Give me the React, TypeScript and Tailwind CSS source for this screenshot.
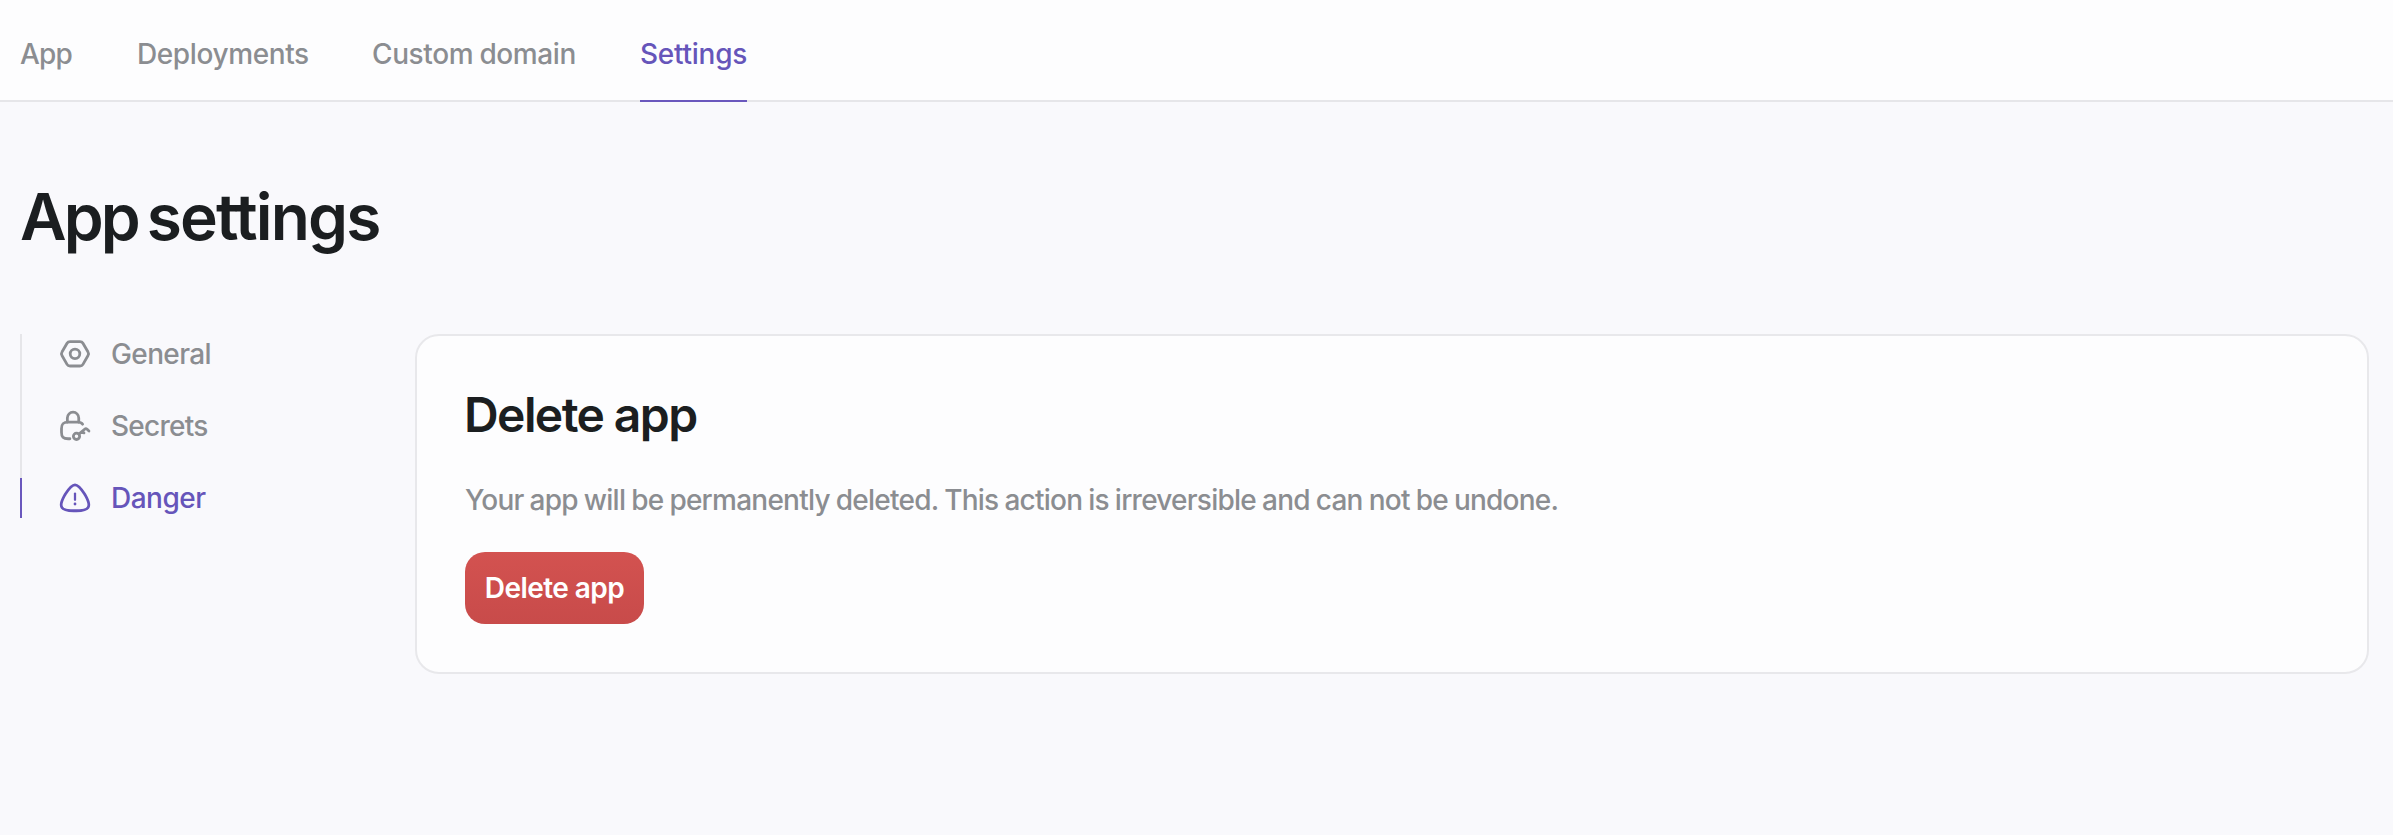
import type { ReactNode } from "react";

const tabs = [
  { label: "App", box: "w-[53px] tracking-[-0.03em]", active: false },
  { label: "Deployments", box: "w-[171px] tracking-[-0.014em]", active: false },
  { label: "Custom domain", box: "w-[204px] tracking-[-0.014em] [word-spacing:-0.03em]", active: false },
  { label: "Settings", box: "w-[107px] tracking-[-0.009em]", active: true },
];

function Icon({ children }: { children: ReactNode }) {
  return (
    <svg
      className="size-9 shrink-0"
      viewBox="0 0 24 24"
      fill="none"
      stroke="currentColor"
      strokeWidth="1.85"
      strokeLinecap="round"
      strokeLinejoin="round"
    >
      {children}
    </svg>
  );
}

const links = [
  {
    label: "General",
    active: false,
    spacing: "tracking-[-0.022em]",
    icon: (
      <Icon>
        <path d="M8.7 3.7h6.6c.9 0 1.6.4 2 1.1l3.3 5.7c.5.8.5 1.9 0 2.7l-3.3 5.7c-.4.7-1.1 1.1-2 1.1H8.7c-.9 0-1.6-.4-2-1.1l-3.3-5.7c-.5-.8-.5-1.9 0-2.7l3.3-5.7c.4-.7 1.1-1.1 2-1.1Z" />
        <circle cx="12" cy="11.9" r="3.2" />
      </Icon>
    ),
  },
  {
    label: "Secrets",
    active: false,
    spacing: "tracking-[-0.027em]",
    icon: (
      <Icon>
        <path d="M6.9 9.4V6.6a3.8 3.8 0 0 1 7.6 0v2.8" />
        <path d="M8.6 20.5H7.4c-3.3 0-4.4-1.1-4.4-4.4v-2.3c0-3.3 1.1-4.4 4.4-4.4h6.2c1.8 0 2.8.3 3.5 1.4" />
        <circle cx="13" cy="18.9" r="2.1" />
        <path d="m14.6 17.4 3.8-3.2c.6-.5 1.1-.5 1.7 0l1.2 1.1M16.9 15.5l1.1 1.1" />
      </Icon>
    ),
  },
  {
    label: "Danger",
    active: true,
    spacing: "tracking-[-0.018em]",
    icon: (
      <Icon>
        <path d="M5.5 9.5C8.3 5 9.9 3.2 12 3.2s3.7 1.8 6.5 6.3l.8 1.4c2 3.7 2.5 5.7 1.5 7.3-1 1.8-3.4 2.3-7.9 2.3h-1.8c-4.5 0-6.9-.5-7.9-2.3-1-1.6-.5-3.6 1.5-7.3Z" />
        <path d="M12 9v4.2" strokeWidth="1.5" />
        <path d="M12 16h.01" />
      </Icon>
    ),
  },
];

export default function App() {
  return (
    <div className="min-h-screen bg-[#f9f9fc] font-['Inter',sans-serif] text-[28px] leading-10 font-medium text-[#8b8d91] antialiased">
      <header className="h-[102px] border-b-2 border-[#e6e6e9] bg-[#fdfdfe] px-5">
        <nav className="flex h-[102px] gap-16">
          {tabs.map((tab) => (
            <a
              key={tab.label}
              className={`${tab.box} block h-full border-b-2 pt-[34px] whitespace-nowrap ${
                tab.active ? "border-[#6a58bd] text-[#6655ba]" : "border-transparent"
              }`}
            >
              {tab.label}
            </a>
          ))}
        </nav>
      </header>
      <main className="pt-[75px] pr-6 pl-5">
        <h1 className="text-[64px] leading-[80px] font-semibold tracking-[-0.028em] text-[#1b1e20] [word-spacing:-0.085em]">
          <span className="tracking-[-0.045em]">App</span> settings
        </h1>
        <div className="mt-[77px] flex items-start">
          <aside className="w-[395px] shrink-0">
            <ul className="flex w-full flex-col">
              {links.map((link) => (
                <li
                  key={link.label}
                  className={`flex items-center gap-[18px] border-l-2 pl-[35px] ${
                    link.active
                      ? "h-10 border-[#6a58bd] text-[#6655ba]"
                      : "h-[72px] border-[#e6e6e9] pb-8"
                  }`}
                >
                  {link.icon}
                  <span className={link.spacing}>{link.label}</span>
                </li>
              ))}
            </ul>
          </aside>
          <section className="h-[340px] flex-1 rounded-3xl border-2 border-[#e8e8eb] bg-[#fdfdfe] px-12 pt-[49px]">
            <h2 className="-ml-px text-[48px] leading-[60px] font-semibold tracking-[-0.033em] text-[#1b1e20]">
              Delete app
            </h2>
            <p className="mt-[35px] whitespace-nowrap tracking-[-0.027em] [word-spacing:-0.026em]">
              Your app will be permanently deleted. This action is irreversible and can not be undone.
            </p>
            <button className="mt-8 flex h-[72px] w-[179px] items-center justify-center rounded-[20px] bg-linear-to-b from-[#d35250] to-[#c84b4a] font-semibold tracking-[-0.02em] whitespace-nowrap text-white">
              Delete app
            </button>
          </section>
        </div>
      </main>
    </div>
  );
}
